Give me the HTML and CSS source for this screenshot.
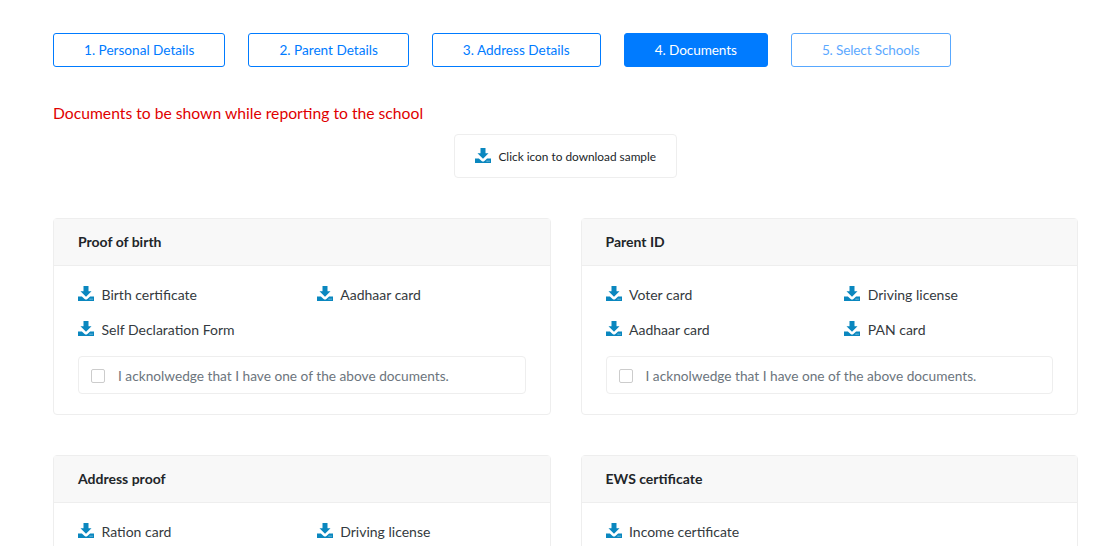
FILE: index.html
```html
<!DOCTYPE html>
<html lang="en">
<head>
    <meta charset="UTF-8">
    <meta name="viewport" content="width=device-width, initial-scale=1.0">
    <title>Documents</title>
    <link rel="stylesheet" href="styles.css">
</head>
<body>
    <svg class="icon-defs" width="0" height="0">
        <symbol id="dl" viewBox="0 0 16 15">
            <path d="M5.5 0h5v5.2h3L8 10.8 2.5 5.2h3z"/>
            <path fill-rule="evenodd" d="M0 10.4h3.9L6.6 13c.8.8 2 .8 2.8 0l2.7-2.6H16V15H0zM11.6 12.7h1v.8h-1zM13.5 12.7h1v.8h-1z"/>
        </symbol>
    </svg>

    <div class="wizard">
        <a class="step">1. Personal Details</a>
        <a class="step">2. Parent Details</a>
        <a class="step">3. Address Details</a>
        <a class="step step-active">4. Documents</a>
        <a class="step step-disabled">5. Select Schools</a>
    </div>

    <p class="notice">Documents to be shown while reporting to the school</p>

    <div class="sample-wrap">
        <div class="sample">
            <svg class="icon"><use href="#dl"/></svg>
            <span>Click icon to download sample</span>
        </div>
    </div>

    <div class="cards">
        <div class="card">
            <div class="card-header">Proof of birth</div>
            <div class="card-body">
                <ul class="doc-list">
                    <li><svg class="icon"><use href="#dl"/></svg>Birth certificate</li>
                    <li><svg class="icon"><use href="#dl"/></svg>Aadhaar card</li>
                    <li><svg class="icon"><use href="#dl"/></svg>Self Declaration Form</li>
                </ul>
                <label class="ack"><span class="check"></span>I acknolwedge that I have one of the above documents.</label>
            </div>
        </div>
        <div class="card">
            <div class="card-header">Parent ID</div>
            <div class="card-body">
                <ul class="doc-list">
                    <li><svg class="icon"><use href="#dl"/></svg>Voter card</li>
                    <li><svg class="icon"><use href="#dl"/></svg>Driving license</li>
                    <li><svg class="icon"><use href="#dl"/></svg>Aadhaar card</li>
                    <li><svg class="icon"><use href="#dl"/></svg>PAN card</li>
                </ul>
                <label class="ack"><span class="check"></span>I acknolwedge that I have one of the above documents.</label>
            </div>
        </div>
        <div class="card">
            <div class="card-header">Address proof</div>
            <div class="card-body">
                <ul class="doc-list">
                    <li><svg class="icon"><use href="#dl"/></svg>Ration card</li>
                    <li><svg class="icon"><use href="#dl"/></svg>Driving license</li>
                </ul>
            </div>
        </div>
        <div class="card">
            <div class="card-header">EWS certificate</div>
            <div class="card-body">
                <ul class="doc-list">
                    <li><svg class="icon"><use href="#dl"/></svg>Income certificate</li>
                </ul>
            </div>
        </div>
    </div>
</body>
</html>
```

FILE: styles.css
```css
html, body {
    height: 100%;
    overflow: hidden;
}
body {
    margin: 0;
    padding: 33px 26px 0 53px;
    box-sizing: border-box;
    font-family: Lato, "Open Sans", sans-serif;
    font-size: 14px;
    color: #343a40;
    background-color: #fff;
}
.icon-defs {
    position: absolute;
}
.wizard {
    display: flex;
    gap: 23px;
}
.step {
    height: 34px;
    box-sizing: border-box;
    padding: 0 30px 1px;
    display: flex;
    align-items: center;
    border: 1px solid #007bff;
    border-radius: 3px;
    font-size: 13.6px;
    color: #007bff;
    background-color: #fff;
}
.step-active {
    background-color: #007bff;
    color: #fff;
    letter-spacing: -0.08px;
}
.step-disabled {
    opacity: 0.65;
    letter-spacing: -0.15px;
}
.notice {
    margin: 37px 0 0;
    font-size: 15.7px;
    line-height: 19px;
    color: #e00000;
}
.sample-wrap {
    display: flex;
    justify-content: center;
    margin: 11px 0 40px;
}
.sample {
    height: 44px;
    box-sizing: border-box;
    padding: 0 20px;
    display: flex;
    align-items: center;
    border: 1px solid #eee;
    border-radius: 4px;
    font-size: 11.85px;
    color: #212529;
}
.icon {
    width: 16px;
    height: 15px;
    margin-right: 7.5px;
    fill: #0a87bf;
    flex: none;
    position: relative;
    top: -1px;
}
.cards {
    display: grid;
    grid-template-columns: 497.5px 497.5px;
    gap: 40px 30px;
}
.card {
    border: 1px solid #eee;
    border-radius: 4px;
}
.card-header {
    height: 47px;
    box-sizing: border-box;
    padding: 0 24px 1px;
    display: flex;
    align-items: center;
    font-weight: 700;
    color: #212529;
    background-color: #f8f8f8;
    border-bottom: 1px solid #eee;
}
.card-body {
    padding: 11px 24px 20px;
}
.doc-list {
    list-style: none;
    margin: 0;
    padding: 0;
    display: grid;
    grid-template-columns: repeat(2, 1fr);
    column-gap: 30px;
}
.doc-list li {
    height: 35px;
    display: flex;
    align-items: center;
}
.ack {
    margin-top: 9px;
    height: 38px;
    box-sizing: border-box;
    padding: 1px 12px 0;
    display: flex;
    align-items: center;
    border: 1px solid #eee;
    border-radius: 4px;
    font-size: 13.7px;
    color: #6c757d;
}
.check {
    width: 14px;
    height: 14px;
    box-sizing: border-box;
    margin-right: 13px;
    border: 1px solid #ccc;
    border-radius: 2px;
    flex: none;
}
```
